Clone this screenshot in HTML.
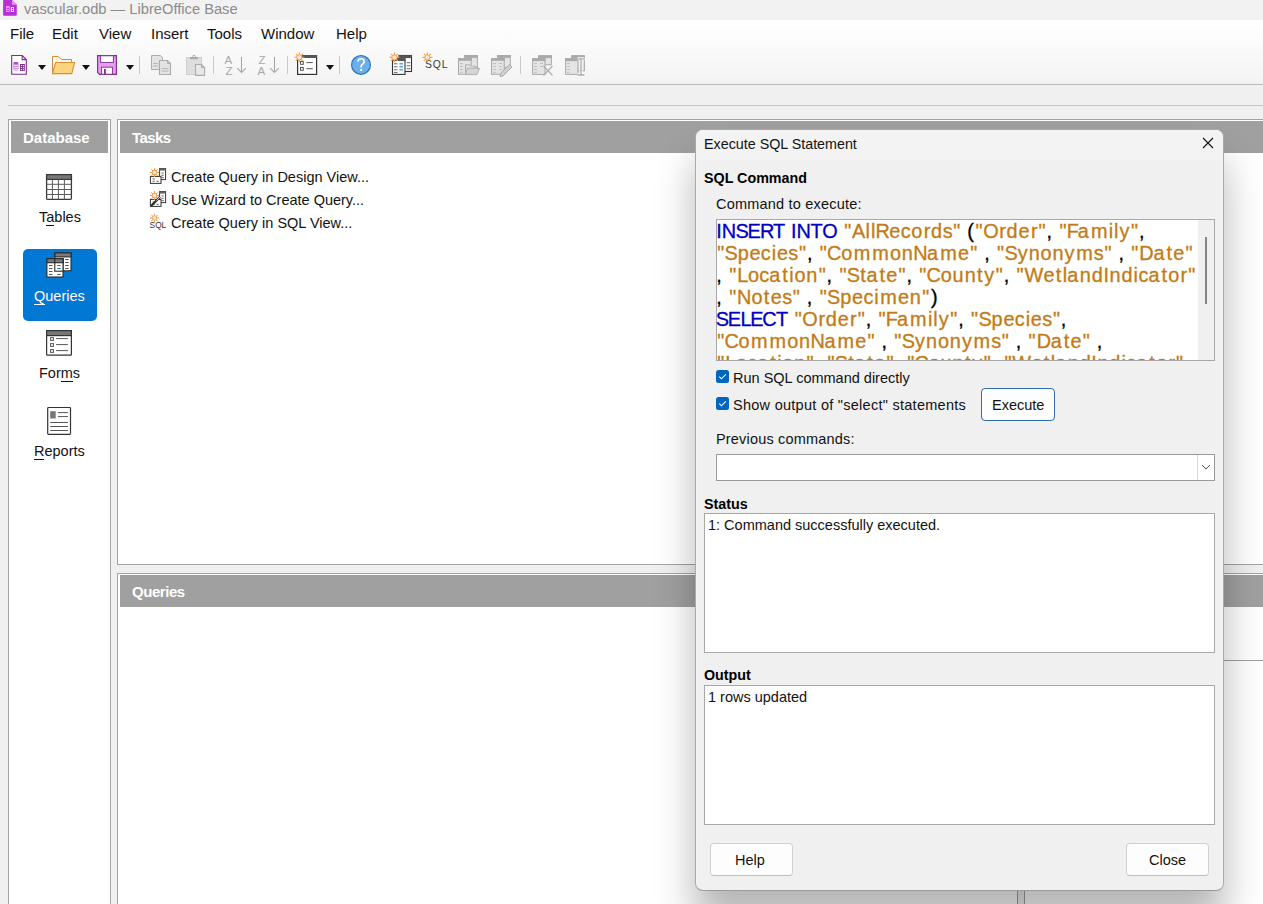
<!DOCTYPE html>
<html><head><meta charset="utf-8">
<style>
*{margin:0;padding:0;box-sizing:border-box}
html,body{width:1263px;height:904px;overflow:hidden}
body{position:relative;background:#f0f0f0;font-family:"Liberation Sans",sans-serif;color:#121212;font-size:14.5px}
.a{position:absolute}
.t{position:absolute;white-space:pre;line-height:1}
#titlebar{left:0;top:0;width:1263px;height:20px;background:#f2f2f2}
#menubar{left:0;top:20px;width:1263px;height:64px;background:linear-gradient(#ffffff 0%,#fcfcfc 30%,#f3f3f3 100%)}
#tbline{left:0;top:84px;width:1263px;height:1px;background:#bdbdbd}
#line2{left:8px;top:105px;width:1255px;height:1px;background:#c4c4c4}
.panel{position:absolute;background:#fff;border:1px solid #a3a3a3}
.hdr{position:absolute;background:#a0a0a0;color:#fff;font-weight:bold;font-size:15px}
.sep{position:absolute;width:1px;height:18px;top:56px;background:#c8c8c8}
.arr{position:absolute;top:65px;width:0;height:0;border-left:4px solid transparent;border-right:4px solid transparent;border-top:5px solid #1a1a1a}
.k{color:#0000c4}.s{color:#c98019}
u{text-decoration:none;border-bottom:1px solid currentColor}
</style></head><body>

<div id="titlebar" class="a"></div>
<div id="menubar" class="a"></div>
<div id="tbline" class="a"></div>
<div id="line2" class="a"></div>

<!-- title -->
<svg class="a" style="left:0;top:0" width="20" height="18" viewBox="0 0 20 18">
  <path d="M3.1 0H12L16.8 4.8V14.6Q16.8 15.8 15.6 15.8H4.3Q3.1 15.8 3.1 14.6Z" fill="#b530d6"/>
  <path d="M12 0V4.8H16.8Z" fill="#f28ff6"/>
  <rect x="6" y="6" width="3.7" height="6" fill="#f78ef9"/>
  <path d="M6.6 8.4H9.1M6.6 10.4H9.1" stroke="#b530d6" stroke-width="0.9"/>
  <rect x="10.8" y="7" width="3.2" height="5" fill="#fff"/>
  <circle cx="12.5" cy="8.6" r="0.75" fill="#9a2ab5"/>
  <circle cx="12.5" cy="10.5" r="0.75" fill="#9a2ab5"/>
</svg>
<div class="t" style="left:24px;top:2px;font-size:14.7px;color:#8b8b8b">vascular.odb — LibreOffice Base</div>

<!-- menu -->
<div class="t" style="left:10px;top:26px;font-size:15px">File</div>
<div class="t" style="left:52px;top:26px;font-size:15px">Edit</div>
<div class="t" style="left:99px;top:26px;font-size:15px">View</div>
<div class="t" style="left:151px;top:26px;font-size:15px">Insert</div>
<div class="t" style="left:207px;top:26px;font-size:15px">Tools</div>
<div class="t" style="left:261px;top:26px;font-size:15px">Window</div>
<div class="t" style="left:336px;top:26px;font-size:15px">Help</div>

<!-- TOOLBAR -->
<svg class="a" style="left:0;top:46px" width="600" height="38" viewBox="0 46 600 38">
 
 <!-- new db doc -->
 <path d="M11.7 55.5H22.2L26.3 59.6V74.3H11.7Z" fill="#fff" stroke="#7b2d8e" stroke-width="1.1"/>
 <path d="M22.2 55.5V59.6H26.3" fill="none" stroke="#7b2d8e" stroke-width="1.1"/>
 <rect x="13.2" y="62.3" width="5.4" height="8.4" rx="2.4" fill="#c987dc"/>
 <ellipse cx="15.9" cy="63" rx="2.7" ry="1" fill="#a54cc2"/>
 <path d="M13.6 65.5H18.2M13.6 67.4H18.2M13.6 69.3H18.2" stroke="#f7e9fb" stroke-width="0.8"/>
 <rect x="20" y="64" width="4.8" height="7" fill="#7b2d8e"/>
 <path d="M21.4 65.6h.1M23.4 65.6h.1M21.4 67.6h.1M23.4 67.6h.1M21.4 69.6h.1M23.4 69.6h.1" stroke="#fff" stroke-width="1.1" stroke-linecap="round"/>
 <path d="M38 65H46L42 70Z" fill="#111"/>
 <!-- open folder -->
 <path d="M52.5 73.5V56.5H58L61.5 59.5H71.5V62.5" fill="#fff8e6" stroke="#d08a40" stroke-width="1"/>
 <path d="M55.7 62.5H74.6L71.8 73.6H52.4Z" fill="#fcd47f" stroke="#d8903e" stroke-width="1.1"/>
 <path d="M82 65H90L86 70Z" fill="#111"/>
 <!-- save -->
 <path d="M97.6 55.6H116.4V74.4H99.6L97.6 72.4Z" fill="#e99bf0" stroke="#7b2d8e" stroke-width="1.1"/>
 <rect x="100.6" y="55.8" width="12.8" height="6.6" fill="#fff" stroke="#7b2d8e" stroke-width="0.9"/>
 <rect x="101.6" y="67.2" width="10.8" height="7" fill="#fff" stroke="#7b2d8e" stroke-width="0.9"/>
 <rect x="104" y="69" width="1.8" height="5" fill="#7b2d8e"/>
 <path d="M126 65H134L130 70Z" fill="#111"/>
 <rect x="139" y="56" width="1" height="18" fill="#c9c9c9"/>
 <!-- copy -->
 <path d="M151.5 55.5H160.5L162.5 57.5V69.5H151.5Z" fill="#e3e3e3" stroke="#ababab"/>
 <path d="M153 63.5H158M153 66H158" stroke="#b5b5b5"/>
 <path d="M159.5 60.5H167.5L170.5 63.5V74.5H159.5Z" fill="#e3e3e3" stroke="#ababab" stroke-width="1.1"/>
 <path d="M167.5 60.5V63.5H170.5" fill="none" stroke="#ababab"/>
 <path d="M161.5 68.5H168.5M161.5 71H168.5" stroke="#b5b5b5"/>
 <!-- paste -->
 <rect x="186.5" y="57.5" width="15" height="17" fill="#dedede" stroke="#cfcfcf"/>
 <rect x="190" y="57" width="8" height="2.2" fill="#a9a9a9"/>
 <circle cx="194" cy="56.5" r="1.3" fill="none" stroke="#a9a9a9"/>
 <path d="M195.5 64.5H201.5L204.6 67.6V75.4H195.5Z" fill="#e8e8e8" stroke="#ababab" stroke-width="1.1"/>
 <path d="M201.5 64.5V67.6H204.6" fill="none" stroke="#ababab"/>
 <rect x="213" y="56" width="1" height="18" fill="#c9c9c9"/>
 <!-- sort asc -->
 <text x="224.6" y="64" font-family="Liberation Sans" font-size="11.5" fill="#a8a8a8">A</text>
 <text x="225.4" y="75" font-family="Liberation Sans" font-size="11.5" fill="#a8a8a8">Z</text>
 <path d="M241.5 57V72.5M237.2 68.2L241.5 72.5L245.8 68.2" fill="none" stroke="#a8a8a8" stroke-width="1.1"/>
 <text x="258.4" y="64" font-family="Liberation Sans" font-size="11.5" fill="#a8a8a8">Z</text>
 <text x="257.6" y="75" font-family="Liberation Sans" font-size="11.5" fill="#a8a8a8">A</text>
 <path d="M274.5 57V72.5M270.2 68.2L274.5 72.5L278.8 68.2" fill="none" stroke="#a8a8a8" stroke-width="1.1"/>
 <rect x="287" y="56" width="1" height="18" fill="#c9c9c9"/>
 <!-- form -->
 <rect x="297.6" y="55.6" width="19" height="18.8" fill="#fff" stroke="#333" stroke-width="1.2"/>
 <rect x="297" y="55" width="20" height="3" fill="#555"/>
 <rect x="300.5" y="61.5" width="2.8" height="2.8" fill="none" stroke="#555"/>
 <rect x="300.5" y="67.5" width="2.8" height="2.8" fill="none" stroke="#555"/>
 <path d="M306.4 62.6H312.8M306.4 68.7H312.8" stroke="#555"/>
 <g transform="translate(299.3 57.3)">
   <path d="M0 -5V5M-5 0H5M-3.5 -3.5L3.5 3.5M-3.5 3.5L3.5 -3.5" stroke="#f0a050" stroke-width="1.1"/>
   <circle r="2.6" fill="#fde6c8" stroke="#f0a050" stroke-width="1"/>
  </g>
 <path d="M326 65H334L330 70Z" fill="#111"/>
 <rect x="339" y="56" width="1" height="18" fill="#c9c9c9"/>
 <!-- help -->
 <circle cx="361" cy="64.9" r="9.4" fill="#6cb0ea" stroke="#2c72b8" stroke-width="1.2"/>
 <path d="M358 61.7Q358 58.8 361.2 58.8Q364.2 58.8 364.2 61.5Q364.2 63.2 362.3 64.3Q361.1 65.1 361.1 66.6V67.4" fill="none" stroke="#fff" stroke-width="1.6"/>
 <rect x="360.2" y="69" width="1.9" height="1.9" fill="#fff"/>
 <!-- new query -->
 <rect x="399" y="55.5" width="12.5" height="16" fill="#fff" stroke="#333" stroke-width="1.1"/>
 <rect x="399" y="55.3" width="12.7" height="2.8" fill="#555"/>
 <rect x="392.5" y="58.8" width="12.5" height="15.6" fill="#fff" stroke="#333" stroke-width="1.1"/>
 <rect x="392" y="58.5" width="13.5" height="2.5" fill="#555"/>
 <rect x="398.8" y="61" width="4.6" height="11" fill="#e2f5fb"/>
 <path d="M394 63.8h3.5M394 66.8h3.5M394 69.8h3.5M394 72.6h3.5M406.8 62.7h3.5M406.8 65.8h3.5M406.8 68.7h3.5" stroke="#555" stroke-width="0.9"/>
 <path d="M399.5 63.8h3.5M399.5 66.8h3.5M399.5 69.8h3.5" stroke="#2f79b4" stroke-width="0.9"/>
 <g transform="translate(394.4 57.4)">
   <path d="M0 -5V5M-5 0H5M-3.5 -3.5L3.5 3.5M-3.5 3.5L3.5 -3.5" stroke="#f0a050" stroke-width="1.1"/>
   <circle r="2.6" fill="#fde6c8" stroke="#f0a050" stroke-width="1"/>
  </g>
 <!-- SQL -->
 <text x="425" y="68" font-family="Liberation Sans" font-size="10.4" letter-spacing="0.9" fill="#3a3a3a">SQL</text>
 <g transform="translate(427.4 57.4)">
   <path d="M0 -5V5M-5 0H5M-3.5 -3.5L3.5 3.5M-3.5 3.5L3.5 -3.5" stroke="#f0a050" stroke-width="1.1"/>
   <circle r="2.6" fill="#fde6c8" stroke="#f0a050" stroke-width="1"/>
  </g>
 <!-- open query (disabled) -->
 <g stroke="#a9a9a9" fill="#e4e4e4">
  <rect x="464.8" y="55.6" width="12.6" height="12" />
  <rect x="458.5" y="58.5" width="12.7" height="15.8"/>
 </g>
 <rect x="464.3" y="55.1" width="13.4" height="2.8" fill="#a9a9a9"/>
 <rect x="458" y="58" width="13.7" height="2.8" fill="#a9a9a9"/>
 <path d="M460 63.5h3M460 66.5h3M460 69.5h3M460 72.3h3" stroke="#c0c0c0"/>
 <path d="M465.5 74.5V64.8H470L471.5 66.3H476V68" fill="#e0e0e0" stroke="#b0b0b0"/>
 <path d="M467.5 68.3H479.5L477 74.6H465.5Z" fill="#d6d6d6" stroke="#b0b0b0"/>
 <!-- edit query (disabled) -->
 <g stroke="#a9a9a9" fill="#e4e4e4">
  <rect x="497.7" y="55.6" width="12.6" height="12"/>
  <rect x="491.5" y="58.5" width="12.7" height="15.8"/>
 </g>
 <rect x="497.2" y="55.1" width="13.4" height="2.8" fill="#a9a9a9"/>
 <rect x="491" y="58" width="13.7" height="2.8" fill="#a9a9a9"/>
 <path d="M493 63.5h3M493 66.5h3M493 69.5h3M493 72.3h3M499 63.5h3M499 66.5h3M499 69.5h3" stroke="#c0c0c0"/>
 <path d="M509.5 64.5L512 67L503 76L500 76.5L500.5 73.5Z" fill="#d0d0d0" stroke="#ababab"/>
 <rect x="520" y="56" width="1" height="18" fill="#c9c9c9"/>
 <!-- delete query -->
 <g stroke="#a9a9a9" fill="#e4e4e4">
  <rect x="538.8" y="55.8" width="12.6" height="9"/>
  <rect x="532.6" y="58.8" width="12.4" height="15.6"/>
 </g>
 <rect x="538.3" y="55.3" width="13.4" height="2.8" fill="#a9a9a9"/>
 <rect x="532.1" y="58.3" width="13.4" height="2.8" fill="#a9a9a9"/>
 <path d="M534 63.5h3M534 66.5h3M534 69.5h3M534 72.3h3M540 63.5h3M540 66.5h3" stroke="#c0c0c0"/>
 <path d="M543.5 66L552.5 75.5M552.5 66L543.5 75.5" stroke="#ababab" stroke-width="1.1"/>
 <!-- rename -->
 <g stroke="#a9a9a9" fill="#e4e4e4">
  <rect x="571.8" y="55.8" width="12.6" height="15"/>
  <rect x="565.6" y="58.8" width="12.4" height="15.6"/>
 </g>
 <rect x="571.3" y="55.3" width="13.4" height="2.8" fill="#a9a9a9"/>
 <rect x="565.1" y="58.3" width="13.4" height="2.8" fill="#a9a9a9"/>
 <path d="M567 63.5h3M567 66.5h3M567 69.5h3M567 72.3h3" stroke="#c0c0c0"/>
 <path d="M577.5 58.8H584.5M577.5 75H584.5M581 58.8V75" stroke="#fff" stroke-width="3"/>
 <path d="M577.5 58.8H584.5M577.5 75H584.5M581 58.8V75" stroke="#a9a9a9" stroke-width="1.3"/>
</svg>


<!-- Database panel -->
<div class="panel" style="left:8px;top:119px;width:103px;height:800px"></div>
<div class="hdr" style="left:11px;top:121px;width:97px;height:32px"><span class="t" style="left:12px;top:9px">Database</span></div>

<!-- Tasks panel -->
<div class="panel" style="left:117px;top:119px;width:1160px;height:446px"></div>
<div class="hdr" style="left:120px;top:121px;width:1150px;height:32px"><span class="t" style="left:12px;top:9px;letter-spacing:-0.6px">Tasks</span></div>

<!-- Queries panel -->
<div class="panel" style="left:117px;top:573px;width:1160px;height:400px"></div>
<div class="hdr" style="left:120px;top:575px;width:1150px;height:32px"><span class="t" style="left:12px;top:9px;letter-spacing:-0.45px">Queries</span></div>

<!-- SIDEBAR -->
<!-- Tables icon -->
<svg class="a" style="left:40px;top:168px" width="40" height="300" viewBox="40 168 40 300">
 <rect x="46.6" y="174.6" width="24.8" height="24.8" rx="0.8" fill="#fff" stroke="#3a3a3a" stroke-width="1.3"/>
 <rect x="46.6" y="174.6" width="24.8" height="4.8" fill="#777" stroke="#3a3a3a" stroke-width="1.3"/>
 <path d="M52.4 179.4V199.4M58.4 179.4V199.4M64.4 179.4V199.4M46.6 184.3H71.4M46.6 189.5H71.4M46.6 194.5H71.4" stroke="#5a5a5a" stroke-width="1"/>
</svg>
<div class="t" style="left:39px;top:210px">T<u>a</u>bles</div>

<!-- Queries selected -->
<div class="a" style="left:23px;top:249px;width:74px;height:72px;background:#0078d4;border-radius:5px"></div>
<svg class="a" style="left:40px;top:248px" width="40" height="36" viewBox="40 248 40 36">
 <rect x="55" y="252.9" width="16" height="17.9" fill="#fff" stroke="#2b2b2b" stroke-width="1.1"/>
 <rect x="55" y="252.9" width="16" height="4" fill="#7a7a7a" stroke="#2b2b2b" stroke-width="1.1"/>
 <rect x="46.9" y="258.7" width="16.1" height="18.3" fill="#fff" stroke="#2b2b2b" stroke-width="1.1"/>
 <rect x="46.9" y="258.7" width="16.1" height="4" fill="#7a7a7a" stroke="#2b2b2b" stroke-width="1.1"/>
 <rect x="54.8" y="258.7" width="8.2" height="12.5" fill="#fff" stroke="#2b2b2b" stroke-width="1.1"/>
 <rect x="54.8" y="258.7" width="8.2" height="4" fill="#7a7a7a" stroke="#2b2b2b" stroke-width="1.1"/>
 <path d="M49 265.5h3.5M49 268.5h3.5M49 271.5h3.5M49 274.5h3.5M57.2 274.5h3.5M65.2 259.5h3.5M65.2 262.5h3.5M65.2 265.5h3.5M65.2 268.5h3.5" stroke="#555" stroke-width="1"/>
 <path d="M57.2 265.5h3.5M57.2 268.5h3.5" stroke="#2f6fa8" stroke-width="1"/>
</svg>
<div class="t" style="left:34px;top:289px;color:#fff"><u>Q</u>ueries</div>

<!-- Forms -->
<svg class="a" style="left:40px;top:325px" width="40" height="120" viewBox="40 325 40 120">
 <rect x="46.6" y="330.6" width="24.8" height="24.6" rx="0.8" fill="#fff" stroke="#333" stroke-width="1.2"/>
 <rect x="46.6" y="330.6" width="24.8" height="5" fill="#777" stroke="#333" stroke-width="1.2"/>
 <rect x="50.6" y="337.6" width="2.8" height="2.8" fill="#fff" stroke="#555" stroke-width="1"/>
 <rect x="50.6" y="343.6" width="2.8" height="2.8" fill="#fff" stroke="#555" stroke-width="1"/>
 <rect x="50.6" y="349.6" width="2.8" height="2.8" fill="#fff" stroke="#555" stroke-width="1"/>
 <path d="M56.1 338.6H67.9M56.1 344.6H67.9M56.1 350.6H67.9" stroke="#555" stroke-width="1"/>
 <!-- Reports -->
 <rect x="47.7" y="407.5" width="22.8" height="26.8" rx="0.8" fill="#fff" stroke="#333" stroke-width="1.2"/>
 <rect x="50.2" y="411.2" width="5.5" height="7.3" fill="#777"/>
 <path d="M57.9 412.6H67.9M57.9 416.6H67.9M50.2 422.5H67.9M50.2 426.5H67.9M50.2 430.5H67.9" stroke="#555" stroke-width="1"/>
</svg>
<div class="t" style="left:39px;top:366px">For<u>m</u>s</div>
<div class="t" style="left:34px;top:444px"><u>R</u>eports</div>


<!-- TASKS -->
<svg class="a" style="left:146px;top:164px" width="24" height="70" viewBox="146 164 24 70">
 
 <g transform="translate(0 0)">
   <rect x="159.6" y="168.6" width="6" height="11" fill="#fff" stroke="#333" stroke-width="1"/>
   <rect x="159.6" y="168.6" width="6" height="2" fill="#666"/>
   <path d="M161.5 173h2.2M161.5 175.3h2.2M161.5 177.6h2.2" stroke="#555" stroke-width="0.9"/>
   <rect x="150.4" y="176.4" width="10.6" height="7" fill="#fff" stroke="#333" stroke-width="1"/>
   <path d="M152.5 179h2.2M152.5 181.3h2.2M156.5 181.3h2.2" stroke="#555" stroke-width="0.9"/>
  </g>
 <g transform="translate(154.5 172.5)">
   <path d="M0 -4.5V4.5M-4.5 0H4.5M-3.2 -3.2L3.2 3.2M-3.2 3.2L3.2 -3.2" stroke="#f0a050" stroke-width="1"/>
   <circle r="2.3" fill="#fde6c8" stroke="#f0a050" stroke-width="0.9"/>
  </g>
 <g transform="translate(0 23)">
   <rect x="159.6" y="168.6" width="6" height="11" fill="#fff" stroke="#333" stroke-width="1"/>
   <rect x="159.6" y="168.6" width="6" height="2" fill="#666"/>
   <path d="M161.5 173h2.2M161.5 175.3h2.2M161.5 177.6h2.2" stroke="#555" stroke-width="0.9"/>
   <rect x="150.4" y="176.4" width="10.6" height="7" fill="#fff" stroke="#333" stroke-width="1"/>
   <path d="M152.5 179h2.2M152.5 181.3h2.2M156.5 181.3h2.2" stroke="#555" stroke-width="0.9"/>
  </g>
 <g transform="translate(154.5 195.5)">
   <path d="M0 -4.5V4.5M-4.5 0H4.5M-3.2 -3.2L3.2 3.2M-3.2 3.2L3.2 -3.2" stroke="#f0a050" stroke-width="1"/>
   <circle r="2.3" fill="#fde6c8" stroke="#f0a050" stroke-width="0.9"/>
  </g>
 <path d="M151 206L160 197" stroke="#333" stroke-width="2.4"/>
 <path d="M156.5 200.5L160 197" stroke="#fff" stroke-width="0.8"/>
 <g transform="translate(154.5 218)">
   <path d="M0 -4.5V4.5M-4.5 0H4.5M-3.2 -3.2L3.2 3.2M-3.2 3.2L3.2 -3.2" stroke="#f0a050" stroke-width="1"/>
   <circle r="2.3" fill="#fde6c8" stroke="#f0a050" stroke-width="0.9"/>
  </g>
 <text x="149.6" y="227.8" font-family="Liberation Sans" font-size="8.3" fill="#333">SQL</text>
</svg>
<div class="t" style="left:171px;top:170px">Create Query in Design View...</div>
<div class="t" style="left:171px;top:193px">Use Wizard to Create Query...</div>
<div class="t" style="left:171px;top:216px">Create Query in SQL View...</div>


<div class="a" style="left:1017px;top:607px;width:1px;height:297px;background:#a0a0a0"></div>
<div class="a" style="left:1024px;top:607px;width:1px;height:297px;background:#a0a0a0"></div>
<div class="a" style="left:1018px;top:607px;width:6px;height:297px;background:#f0f0f0"></div>
<div class="a" style="left:1025px;top:660px;width:238px;height:1px;background:#a0a0a0"></div>
<!-- DIALOG -->
<div class="a" id="dlg" style="left:695px;top:129px;width:529px;height:762px;background:#f0f0f0;border:1px solid #a9a9a9;border-bottom-color:#9a9a9a;border-radius:8px;box-shadow:0 32px 39px rgba(0,0,0,0.29),inset 1px 0 0 #f5f5f5,inset -1px 0 0 #f5f5f5">
 <div class="a" style="left:0;top:0;width:527px;height:30px;background:#f3f3f3;border-radius:7px 7px 0 0"></div>
</div>
<div class="t" style="left:704px;top:137px;font-size:14.3px">Execute SQL Statement</div>
<svg class="a" style="left:1202px;top:137px" width="12" height="12" viewBox="0 0 12 12"><path d="M1 1L11 11M11 1L1 11" stroke="#111" stroke-width="1.1"/></svg>
<div class="t" style="left:704px;top:171px;font-size:14.3px;font-weight:bold;color:#000">SQL Command</div>
<div class="t" style="left:716px;top:197px;font-size:14.5px;letter-spacing:0.2px">Command to execute:</div>

<!-- SQL text box -->
<div class="a" style="left:716px;top:219px;width:499px;height:142px;background:#fff;border:1px solid #a8a8a8"></div>
<svg class="a" style="left:716px;top:220px" width="498" height="140" viewBox="716 220 498 140"><g font-family="Liberation Sans" font-size="19.9" stroke-width="0.3" style="white-space:pre"><text y="238"><tspan fill="#0000c0" stroke="#0000c0" x="716.34 721.82 735.61 747.48 759.9 773.11 791.07 796.55 810.58 822.19">INSERTINTO</tspan><tspan fill="#c37b14" stroke="#c37b14" x="844.28 852.04 865.61 870.89 875.46 889.29 900.65 911.36 923.66 930.9 942.68 953.31">"AllRecords"</tspan><tspan fill="#000" stroke="#000" x="967.14">(</tspan><tspan fill="#c37b14" stroke="#c37b14" x="975.5 983.15 999.32 1006.55 1018.58 1030.88 1038.57">"Order"</tspan><tspan fill="#000" stroke="#000" x="1046.53">,</tspan><tspan fill="#c37b14" stroke="#c37b14" x="1059.39 1066.64 1077.79 1090.88 1108.81 1114.08 1119.57 1131.01">"Family"</tspan><tspan fill="#000" stroke="#000" x="1138.97">,</tspan></text>
<text y="260"><tspan fill="#c37b14" stroke="#c37b14" x="717.14 724.54 737.72 749.51 760.87 771.73 776.92 788.37 799">"Species"</tspan><tspan fill="#000" stroke="#000" x="806.96">,</tspan><tspan fill="#c37b14" stroke="#c37b14" x="819.82 827.06 841.27 853.63 872.14 889.91 901.78 913.21 927.08 940.17 958.01 970.19">"CommonName"</tspan><tspan fill="#000" stroke="#000" x="984.19">,</tspan><tspan fill="#c37b14" stroke="#c37b14" x="997.04 1004.44 1017.65 1028.78 1040.58 1052.45 1064.6 1076.22 1093.82 1104.45">"Synonyms"</tspan><tspan fill="#000" stroke="#000" x="1118.45">,</tspan><tspan fill="#c37b14" stroke="#c37b14" x="1131.31 1139.37 1153.41 1166.39 1173.28 1185.46">"Date"</tspan></text>
<text y="282"><tspan fill="#000" stroke="#000" x="716.36">,</tspan><tspan fill="#c37b14" stroke="#c37b14" x="729.22 737.27 747.99 759.35 769.35 782.33 789.31 794.43 806.3 818.65">"Location"</tspan><tspan fill="#000" stroke="#000" x="826.61">,</tspan><tspan fill="#c37b14" stroke="#c37b14" x="839.47 846.87 860.34 866.45 879.43 886.32 898.5">"State"</tspan><tspan fill="#000" stroke="#000" x="906.46">,</tspan><tspan fill="#c37b14" stroke="#c37b14" x="919.32 926.56 940.77 952.56 964.68 977.11 984.29 995.73">"County"</tspan><tspan fill="#000" stroke="#000" x="1003.69">,</tspan><tspan fill="#c37b14" stroke="#c37b14" x="1016.55 1024.44 1043.58 1055.83 1062.8 1067.22 1079.82 1091.72 1103.43 1109.53 1121.42 1133.54 1138.4 1148.4 1161.38 1168.2 1180.51 1188.19">"WetlandIndicator"</tspan></text>
<text y="304"><tspan fill="#000" stroke="#000" x="716.36">,</tspan><tspan fill="#c37b14" stroke="#c37b14" x="729.22 737.03 751.61 763.87 770.75 782.2 792.83">"Notes"</tspan><tspan fill="#000" stroke="#000" x="806.83">,</tspan><tspan fill="#c37b14" stroke="#c37b14" x="819.69 827.09 840.27 852.06 863.42 874.29 880.14 897.98 909.85 922.2">"Specimen"</tspan><tspan fill="#000" stroke="#000" x="931">)</tspan></text>
<text y="326"><tspan fill="#0000c0" stroke="#0000c0" x="715.8 727.66 740.52 750.25 762.3 775.95">SELECT</tspan><tspan fill="#c37b14" stroke="#c37b14" x="794.71 802.35 818.52 825.76 837.78 850.08 857.77">"Order"</tspan><tspan fill="#000" stroke="#000" x="865.74">,</tspan><tspan fill="#c37b14" stroke="#c37b14" x="878.59 885.84 896.99 910.08 928.01 933.28 938.77 950.21">"Family"</tspan><tspan fill="#000" stroke="#000" x="958.17">,</tspan><tspan fill="#c37b14" stroke="#c37b14" x="971.03 978.43 991.61 1003.4 1014.77 1025.63 1030.82 1042.27 1052.89">"Species"</tspan><tspan fill="#000" stroke="#000" x="1060.86">,</tspan></text>
<text y="348"><tspan fill="#c37b14" stroke="#c37b14" x="717.14 724.38 738.59 750.95 769.46 787.23 799.1 810.53 824.4 837.49 855.33 867.5">"CommonName"</tspan><tspan fill="#000" stroke="#000" x="881.51">,</tspan><tspan fill="#c37b14" stroke="#c37b14" x="894.36 901.76 914.97 926.1 937.89 949.76 961.92 973.54 991.14 1001.77">"Synonyms"</tspan><tspan fill="#000" stroke="#000" x="1015.77">,</tspan><tspan fill="#c37b14" stroke="#c37b14" x="1028.62 1036.69 1050.73 1063.71 1070.6 1082.78">"Date"</tspan><tspan fill="#000" stroke="#000" x="1096.78">,</tspan></text>
<text y="370"><tspan fill="#c37b14" stroke="#c37b14" x="717.14 725.19 735.91 747.27 757.27 770.25 777.23 782.35 794.22 806.57">"Location"</tspan><tspan fill="#000" stroke="#000" x="814.53">,</tspan><tspan fill="#c37b14" stroke="#c37b14" x="827.39 834.79 848.26 854.37 867.36 874.24 886.42">"State"</tspan><tspan fill="#000" stroke="#000" x="894.38">,</tspan><tspan fill="#c37b14" stroke="#c37b14" x="907.24 914.48 928.69 940.48 952.6 965.03 972.21 983.65">"County"</tspan><tspan fill="#000" stroke="#000" x="991.61">,</tspan><tspan fill="#c37b14" stroke="#c37b14" x="1004.47 1012.36 1031.5 1043.75 1050.72 1055.15 1067.74 1079.64 1091.36 1097.45 1109.34 1121.46 1126.33 1136.32 1149.3 1156.13 1168.43 1176.12">"WetlandIndicator"</tspan></text></g></svg>
<div class="a" style="left:1198px;top:220px;width:16px;height:140px;background:#f0f0f0"></div>
<div class="a" style="left:1205px;top:237px;width:2px;height:67px;background:#858585"></div>
<!-- checkboxes -->
<svg class="a" style="left:716px;top:370px" width="13" height="13" viewBox="0 0 13 13"><rect width="13" height="13" rx="2.5" fill="#0067c0"/><path d="M3.3 6.7L5.4 8.8L9.8 4.3" fill="none" stroke="#fff" stroke-width="1.1"/></svg>
<div class="t" style="left:733px;top:371px;font-size:14.5px">Run SQL command directly</div>
<svg class="a" style="left:716px;top:397px" width="13" height="13" viewBox="0 0 13 13"><rect width="13" height="13" rx="2.5" fill="#0067c0"/><path d="M3.3 6.7L5.4 8.8L9.8 4.3" fill="none" stroke="#fff" stroke-width="1.1"/></svg>
<div class="t" style="left:733px;top:398px;font-size:14.5px;letter-spacing:0.27px">Show output of "select" statements</div>

<div class="a" style="left:981px;top:388px;width:74px;height:33px;background:#fdfdfd;border:1px solid #2f6ea8;border-radius:4px"></div>
<div class="t" style="left:992px;top:398px;font-size:14.5px">Execute</div>

<div class="t" style="left:716px;top:432px;font-size:14.5px;letter-spacing:0.18px">Previous commands:</div>
<div class="a" style="left:716px;top:454px;width:499px;height:27px;background:#fff;border:1px solid #9a9a9a">
 <div class="a" style="left:480px;top:0;width:17px;height:25px;border-left:1px solid #d6d6d6;background:#fff"></div>
 <svg class="a" style="left:484px;top:8px" width="10" height="8" viewBox="0 0 10 8"><path d="M1 2L5 6L9 2" fill="none" stroke="#555" stroke-width="1"/></svg>
</div>

<div class="t" style="left:704px;top:497px;font-size:14.3px;font-weight:bold;color:#000">Status</div>
<div class="a" style="left:704px;top:513px;width:511px;height:140px;background:#fff;border:1px solid #a8a8a8"></div>
<div class="t" style="left:708px;top:518px;font-size:14.5px">1: Command successfully executed.</div>

<div class="t" style="left:704px;top:668px;font-size:14.3px;font-weight:bold;color:#000">Output</div>
<div class="a" style="left:704px;top:685px;width:511px;height:140px;background:#fff;border:1px solid #a8a8a8"></div>
<div class="t" style="left:708px;top:690px;font-size:14.5px">1 rows updated</div>

<div class="a" style="left:710px;top:843px;width:83px;height:33px;background:#fdfdfd;border:1px solid #d0d0d0;border-bottom-color:#bdbdbd;border-radius:4px"></div>
<div class="t" style="left:735px;top:853px;font-size:14.5px">Help</div>
<div class="a" style="left:1126px;top:843px;width:83px;height:33px;background:#fdfdfd;border:1px solid #d0d0d0;border-bottom-color:#bdbdbd;border-radius:4px"></div>
<div class="t" style="left:1149px;top:853px;font-size:14.5px">Close</div>


</body></html>
